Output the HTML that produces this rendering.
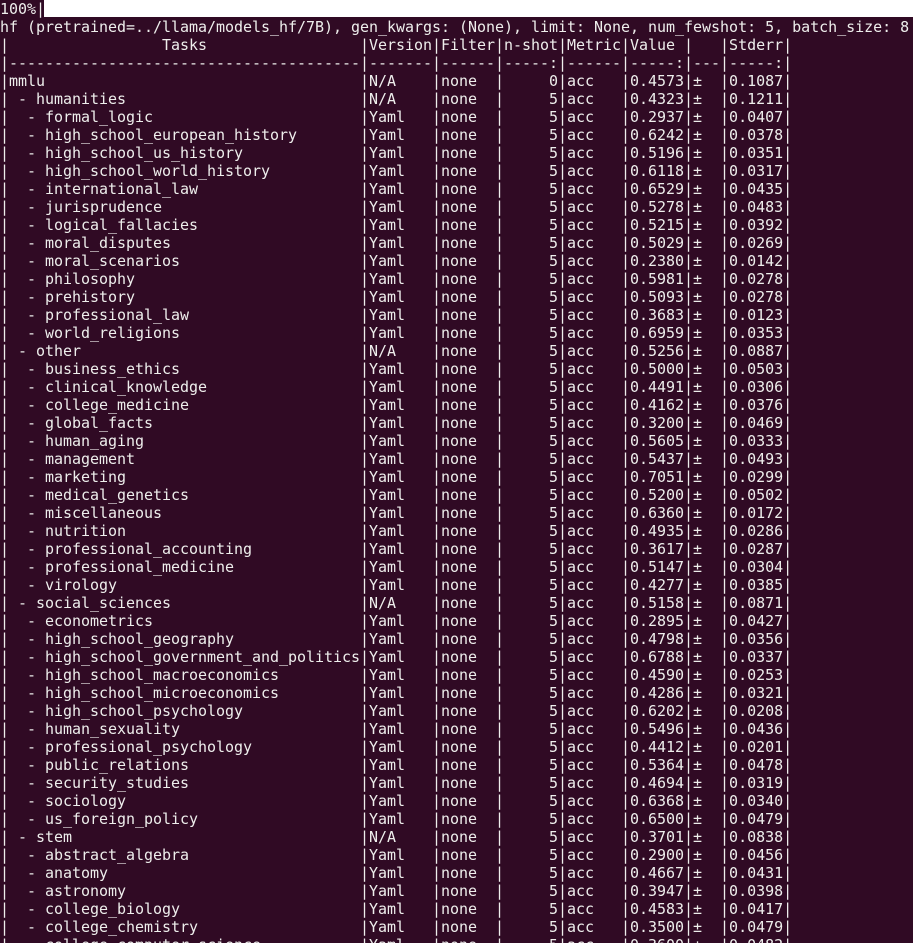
<!DOCTYPE html>
<html><head><meta charset="utf-8"><style>
html,body{margin:0;padding:0;background:#300a24;width:913px;height:943px;overflow:hidden}
pre{margin:0;padding:0;font-family:"DejaVu Sans Mono","Liberation Mono",monospace;font-size:15px;letter-spacing:-0.03px;line-height:18px;color:#eeeeec;white-space:pre}
.w{position:absolute;left:44px;top:0;width:869px;height:17px;background:#fff}
</style></head><body>
<div class="w"></div>
<pre>100%|
hf (pretrained=../llama/models_hf/7B), gen_kwargs: (None), limit: None, num_fewshot: 5, batch_size: 8
|                 Tasks                 |Version|Filter|n-shot|Metric|Value |   |Stderr|
|---------------------------------------|-------|------|-----:|------|-----:|---|-----:|
|mmlu                                   |N/A    |none  |     0|acc   |0.4573|±  |0.1087|
| - humanities                          |N/A    |none  |     5|acc   |0.4323|±  |0.1211|
|  - formal_logic                       |Yaml   |none  |     5|acc   |0.2937|±  |0.0407|
|  - high_school_european_history       |Yaml   |none  |     5|acc   |0.6242|±  |0.0378|
|  - high_school_us_history             |Yaml   |none  |     5|acc   |0.5196|±  |0.0351|
|  - high_school_world_history          |Yaml   |none  |     5|acc   |0.6118|±  |0.0317|
|  - international_law                  |Yaml   |none  |     5|acc   |0.6529|±  |0.0435|
|  - jurisprudence                      |Yaml   |none  |     5|acc   |0.5278|±  |0.0483|
|  - logical_fallacies                  |Yaml   |none  |     5|acc   |0.5215|±  |0.0392|
|  - moral_disputes                     |Yaml   |none  |     5|acc   |0.5029|±  |0.0269|
|  - moral_scenarios                    |Yaml   |none  |     5|acc   |0.2380|±  |0.0142|
|  - philosophy                         |Yaml   |none  |     5|acc   |0.5981|±  |0.0278|
|  - prehistory                         |Yaml   |none  |     5|acc   |0.5093|±  |0.0278|
|  - professional_law                   |Yaml   |none  |     5|acc   |0.3683|±  |0.0123|
|  - world_religions                    |Yaml   |none  |     5|acc   |0.6959|±  |0.0353|
| - other                               |N/A    |none  |     5|acc   |0.5256|±  |0.0887|
|  - business_ethics                    |Yaml   |none  |     5|acc   |0.5000|±  |0.0503|
|  - clinical_knowledge                 |Yaml   |none  |     5|acc   |0.4491|±  |0.0306|
|  - college_medicine                   |Yaml   |none  |     5|acc   |0.4162|±  |0.0376|
|  - global_facts                       |Yaml   |none  |     5|acc   |0.3200|±  |0.0469|
|  - human_aging                        |Yaml   |none  |     5|acc   |0.5605|±  |0.0333|
|  - management                         |Yaml   |none  |     5|acc   |0.5437|±  |0.0493|
|  - marketing                          |Yaml   |none  |     5|acc   |0.7051|±  |0.0299|
|  - medical_genetics                   |Yaml   |none  |     5|acc   |0.5200|±  |0.0502|
|  - miscellaneous                      |Yaml   |none  |     5|acc   |0.6360|±  |0.0172|
|  - nutrition                          |Yaml   |none  |     5|acc   |0.4935|±  |0.0286|
|  - professional_accounting            |Yaml   |none  |     5|acc   |0.3617|±  |0.0287|
|  - professional_medicine              |Yaml   |none  |     5|acc   |0.5147|±  |0.0304|
|  - virology                           |Yaml   |none  |     5|acc   |0.4277|±  |0.0385|
| - social_sciences                     |N/A    |none  |     5|acc   |0.5158|±  |0.0871|
|  - econometrics                       |Yaml   |none  |     5|acc   |0.2895|±  |0.0427|
|  - high_school_geography              |Yaml   |none  |     5|acc   |0.4798|±  |0.0356|
|  - high_school_government_and_politics|Yaml   |none  |     5|acc   |0.6788|±  |0.0337|
|  - high_school_macroeconomics         |Yaml   |none  |     5|acc   |0.4590|±  |0.0253|
|  - high_school_microeconomics         |Yaml   |none  |     5|acc   |0.4286|±  |0.0321|
|  - high_school_psychology             |Yaml   |none  |     5|acc   |0.6202|±  |0.0208|
|  - human_sexuality                    |Yaml   |none  |     5|acc   |0.5496|±  |0.0436|
|  - professional_psychology            |Yaml   |none  |     5|acc   |0.4412|±  |0.0201|
|  - public_relations                   |Yaml   |none  |     5|acc   |0.5364|±  |0.0478|
|  - security_studies                   |Yaml   |none  |     5|acc   |0.4694|±  |0.0319|
|  - sociology                          |Yaml   |none  |     5|acc   |0.6368|±  |0.0340|
|  - us_foreign_policy                  |Yaml   |none  |     5|acc   |0.6500|±  |0.0479|
| - stem                                |N/A    |none  |     5|acc   |0.3701|±  |0.0838|
|  - abstract_algebra                   |Yaml   |none  |     5|acc   |0.2900|±  |0.0456|
|  - anatomy                            |Yaml   |none  |     5|acc   |0.4667|±  |0.0431|
|  - astronomy                          |Yaml   |none  |     5|acc   |0.3947|±  |0.0398|
|  - college_biology                    |Yaml   |none  |     5|acc   |0.4583|±  |0.0417|
|  - college_chemistry                  |Yaml   |none  |     5|acc   |0.3500|±  |0.0479|
|  - college_computer_science           |Yaml   |none  |     5|acc   |0.3600|±  |0.0482|
</pre>
</body></html>
